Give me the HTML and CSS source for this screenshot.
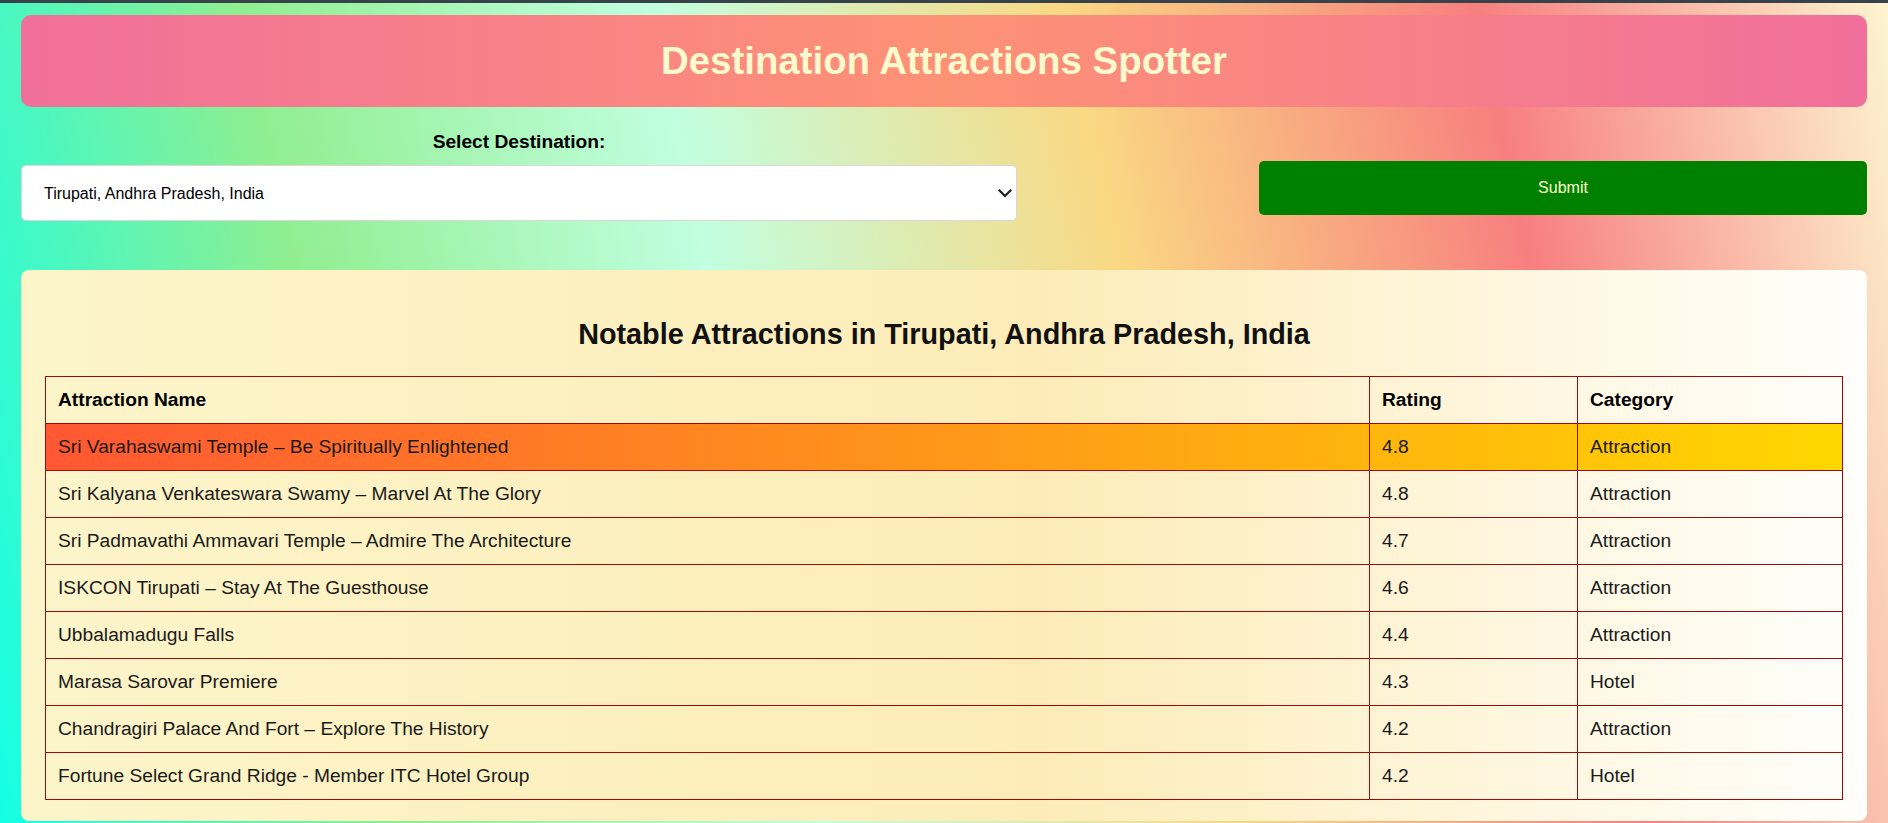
FILE: index.html
```html
<!DOCTYPE html>
<html lang="en">
<head>
<meta charset="utf-8">
<title>Destination Attractions Spotter</title>
<link rel="stylesheet" href="styles.css">
</head>
<body>
<header class="banner">
  <h1 class="banner-title">Destination Attractions Spotter</h1>
</header>

<form class="controls">
  <div class="field">
    <label class="field-label" for="dest">Select Destination:</label>
    <div class="select-wrap">
      <select id="dest" class="select">
        <option>Tirupati, Andhra Pradesh, India</option>
      </select>
      <svg class="chevron" width="14" height="9" viewBox="0 0 14 9" aria-hidden="true">
        <path d="M1.5 1.5 L7 7 L12.5 1.5" fill="none" stroke="#1e1e1e" stroke-width="2.2" stroke-linecap="square" stroke-linejoin="miter"/>
      </svg>
    </div>
  </div>
  <div class="action">
    <button class="submit" type="button">Submit</button>
  </div>
</form>

<section class="card">
  <h2 class="card-title">Notable Attractions in Tirupati, Andhra Pradesh, India</h2>
  <table class="attractions">
    <thead>
      <tr>
        <th class="col-name">Attraction Name</th>
        <th class="col-rating">Rating</th>
        <th class="col-cat">Category</th>
      </tr>
    </thead>
    <tbody>
      <tr class="top-pick">
        <td>Sri Varahaswami Temple – Be Spiritually Enlightened</td>
        <td>4.8</td>
        <td>Attraction</td>
      </tr>
      <tr>
        <td>Sri Kalyana Venkateswara Swamy – Marvel At The Glory</td>
        <td>4.8</td>
        <td>Attraction</td>
      </tr>
      <tr>
        <td>Sri Padmavathi Ammavari Temple – Admire The Architecture</td>
        <td>4.7</td>
        <td>Attraction</td>
      </tr>
      <tr>
        <td>ISKCON Tirupati – Stay At The Guesthouse</td>
        <td>4.6</td>
        <td>Attraction</td>
      </tr>
      <tr>
        <td>Ubbalamadugu Falls</td>
        <td>4.4</td>
        <td>Attraction</td>
      </tr>
      <tr>
        <td>Marasa Sarovar Premiere</td>
        <td>4.3</td>
        <td>Hotel</td>
      </tr>
      <tr>
        <td>Chandragiri Palace And Fort – Explore The History</td>
        <td>4.2</td>
        <td>Attraction</td>
      </tr>
      <tr>
        <td>Fortune Select Grand Ridge - Member ITC Hotel Group</td>
        <td>4.2</td>
        <td>Hotel</td>
      </tr>
    </tbody>
  </table>
</section>
</body>
</html>
```

FILE: styles.css
```css
html {
  min-height: 100%;
  background: linear-gradient(78deg, #14ffe6 0%, #90ee90 20%, #c1ffe0 40%, #fad883 60%, #f77f7f 80%, #fdf5d0 100%);
}

body {
  margin: 0;
  border-top: 3px solid #37424a;
  padding: 12px 21px 0;
  font-family: "Liberation Sans", Arial, sans-serif;
  font-size: 16px;
  color: #111;
}

.banner {
  border-radius: 10px;
  padding: 24px;
  background: linear-gradient(to right, #f06f9b 0%, #fe9275 50%, #f06f9b 100%);
}

.banner-title {
  margin: 0;
  text-align: center;
  font-size: 38.4px;
  font-weight: bold;
  color: #fffacd;
}

.controls {
  display: grid;
  grid-template-columns: 996px 608px;
  justify-content: space-between;
  margin: 24px 0 49px;
}

.field {
  display: flex;
  flex-direction: column;
}

.field-label {
  display: block;
  text-align: center;
  font-size: 19.2px;
  font-weight: bold;
  color: #000;
  margin-bottom: 12px;
}

.select-wrap {
  position: relative;
}

.select {
  display: block;
  width: 100%;
  height: 56px;
  box-sizing: border-box;
  -webkit-appearance: none;
  appearance: none;
  border: 1px solid #d8d8d8;
  border-radius: 5px;
  background: #fff;
  padding: 0 40px 0 22px;
  font-family: "Liberation Sans", Arial, sans-serif;
  font-size: 16px;
  color: #000;
}

.chevron {
  position: absolute;
  right: 5px;
  top: 50%;
  margin-top: -4px;
  pointer-events: none;
}

.action {
  padding-top: 30px;
}

.submit {
  display: block;
  width: 100%;
  height: 54px;
  border: none;
  border-radius: 5px;
  background: #008000;
  color: #fffacd;
  font-family: "Liberation Sans", Arial, sans-serif;
  font-size: 16px;
}

.card {
  border-radius: 8px;
  padding: 24px 24px 21px;
  background: linear-gradient(to right, #fcf5ca 0%, #fdecb8 55%, #fffefb 100%);
}

.card-title {
  margin: 0.83em 0 25px;
  text-align: center;
  font-size: 28.8px;
  font-weight: bold;
  color: #111;
}

.attractions {
  width: 100%;
  border-collapse: collapse;
  table-layout: fixed;
  font-size: 19.2px;
  color: #1a1a1a;
}

.attractions th,
.attractions td {
  border: 1px solid #9e0b0b;
  padding: 12px;
  text-align: left;
  line-height: normal;
}

.attractions th {
  font-weight: bold;
  color: #000;
}

.col-rating {
  width: 183px;
}

.col-cat {
  width: 240px;
}

.top-pick {
  background: linear-gradient(to right, #ff5733, #ffd700);
}
```
